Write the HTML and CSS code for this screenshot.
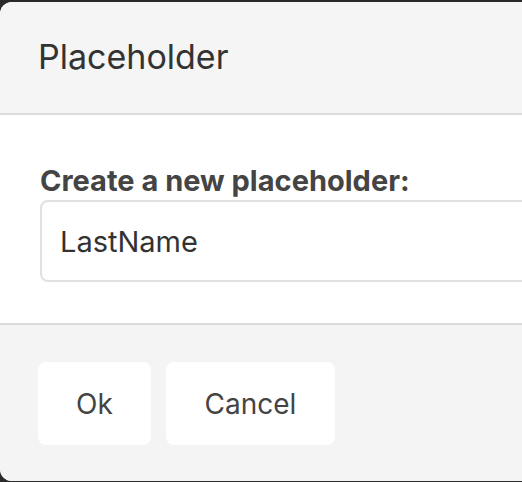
FILE: index.html
```html
<!DOCTYPE html>
<html>
<head>
<meta charset="utf-8">
<link rel="stylesheet" href="styles.css">
</head>
<body>
<div class="dialog">
  <div class="header">
    <h4 class="title">Placeholder</h4>
  </div>
  <div class="content">
    <label class="label" for="ph">Create a new placeholder:</label>
    <input class="input" id="ph" type="text" value="LastName">
  </div>
  <div class="footer">
    <button class="btn btn-ok">Ok</button>
    <button class="btn btn-cancel">Cancel</button>
  </div>
</div>
</body>
</html>
```
FILE: styles.css
```css
html, body {
  margin: 0;
  padding: 0;
  background: #2a2a2a;
  height: 482px;
  overflow: hidden;
}
body {
  font-family: Inter, "Liberation Sans", sans-serif;
  color: #333;
}
.dialog {
  margin-top: 2px;
  width: 522px;
  height: 479px;
  border-radius: 12px 0 0 12px;
  overflow: hidden;
  background: #f4f4f4;
  display: flex;
  flex-direction: column;
}
.header {
  height: 113px;
  flex: none;
  box-sizing: border-box;
  background: #f5f5f5;
  border-bottom: 2px solid #dcdcdc;
  padding-left: 38px;
  display: flex;
  align-items: center;
}
.title {
  margin: 0;
  font-size: 34px;
  font-weight: 400;
  color: #333;
  line-height: 1;
  padding-bottom: 2px;
}
.content {
  height: 210px;
  flex: none;
  box-sizing: border-box;
  background: #fff;
  border-bottom: 2px solid #dcdcdc;
  padding: 49px 0 0 40px;
  display: flex;
  flex-direction: column;
}
.label {
  font-size: 29px;
  font-weight: 700;
  color: #444;
  line-height: 34px;
  margin-bottom: 2px;
}
.input {
  height: 82px;
  width: calc(100% + 20px);
  box-sizing: border-box;
  border: 2px solid #e0e0e0;
  border-radius: 8px;
  padding: 0 18px;
  font-family: Inter, "Liberation Sans", sans-serif;
  font-size: 29px;
  color: #333;
  background: #fff;
  outline: none;
}
.footer {
  flex: 1;
  background: #f4f4f4;
  padding: 37px 0 0 38px;
  display: flex;
  gap: 15px;
  align-items: flex-start;
}
.btn {
  height: 83px;
  border: none;
  border-radius: 8px;
  background: #fff;
  font-family: Inter, "Liberation Sans", sans-serif;
  font-size: 28px;
  color: #444;
  padding: 0;
}
.btn-ok { width: 113px; }
.btn-cancel { width: 169px; }
```
